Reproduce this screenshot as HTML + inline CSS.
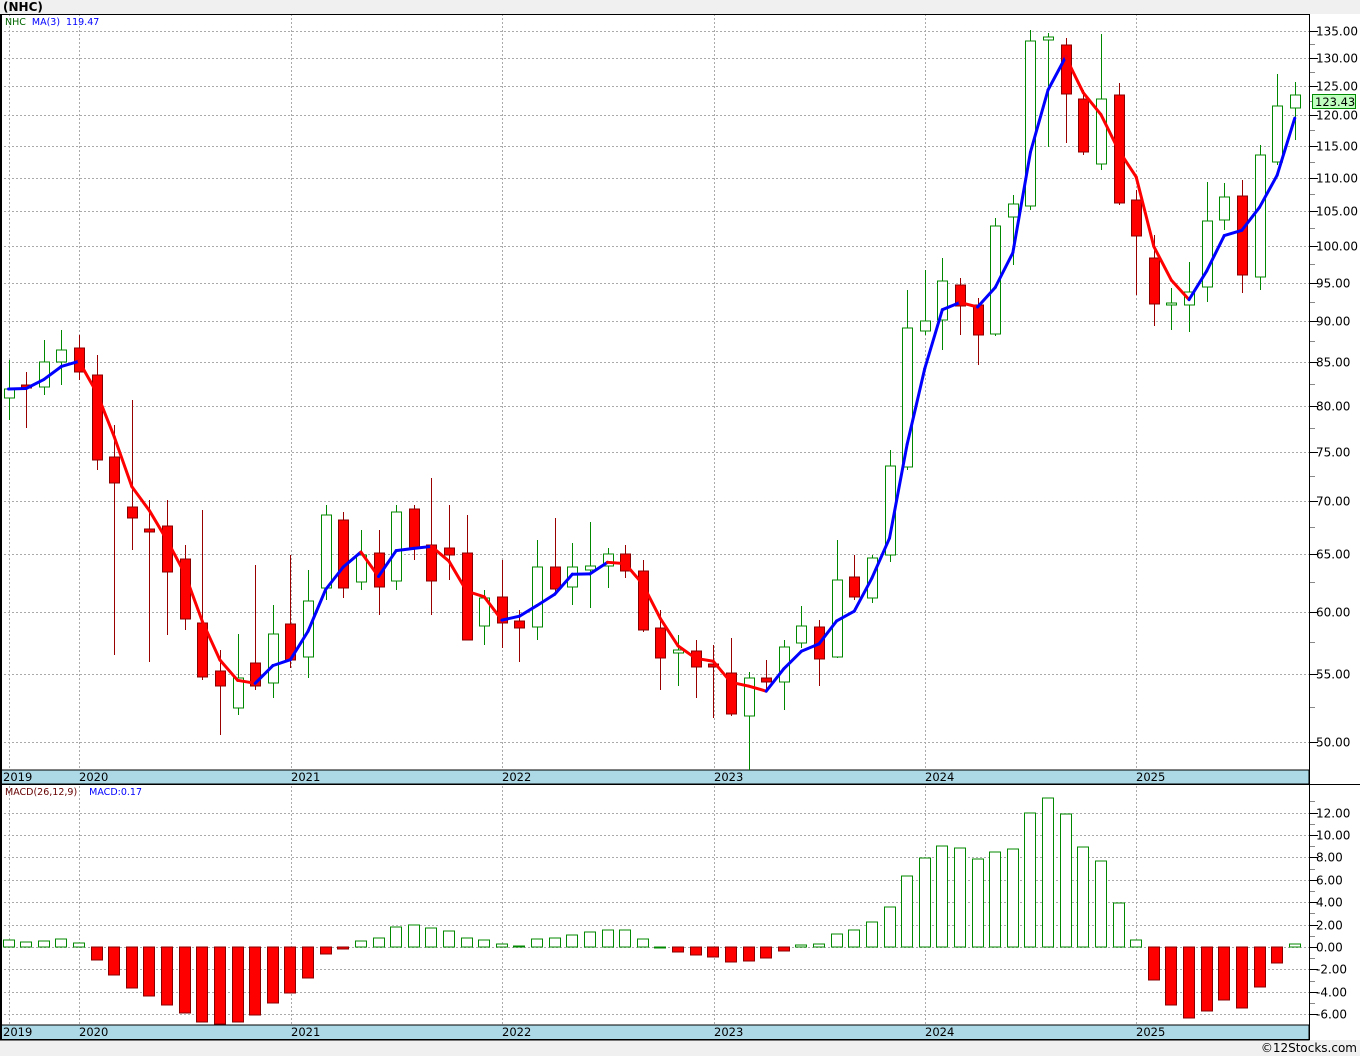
<!DOCTYPE html><html><head><meta charset="utf-8"><style>
body{margin:0;background:#fff;width:1360px;height:1056px;overflow:hidden;font-family:"DejaVu Sans","Liberation Sans",sans-serif}
</style></head><body>
<svg id="s" width="1360" height="1056" xmlns="http://www.w3.org/2000/svg" font-family="DejaVu Sans, Liberation Sans, sans-serif"></svg>
<script>
var D=[[398,389,360,420],[385,388,372,428],[387,362,340,395],[362,350,330,385],[348,372,335,380],[375,460,355,470],[457,483,425,655],[507,518,400,550],[529,532,500,662],[526,572,500,635],[559,619,545,630],[623,677,510,680],[671,686,650,735],[708,678,634,715],[663,686,565,690],[683,634,605,698],[624,660,555,668],[657,601,570,678],[588,515,505,600],[520,588,512,598],[582,555,530,590],[553,587,530,615],[581,512,505,590],[509,548,505,560],[545,581,478,615],[548,555,505,580],[553,640,515,640],[626,598,590,645],[597,623,560,648],[621,628,610,662],[627,567,540,640],[567,589,518,595],[587,567,543,605],[570,566,522,608],[566,554,548,588],[554,571,545,578],[571,630,560,632],[628,658,610,690],[653,650,635,686],[651,667,640,698],[664,667,645,718],[673,714,638,716],[716,678,672,770],[678,682,660,690],[682,647,640,710],[643,626,606,648],[627,659,620,686],[657,580,540,658],[577,597,555,600],[598,558,555,603],[555,466,450,562],[467,328,290,470],[331,321,270,335],[320,281,258,350],[285,306,278,335],[305,335,298,365],[334,226,218,336],[217,204,195,265],[206,41,30,210],[40,37,33,147],[45,94,38,143],[99,152,90,155],[164,99,34,170],[95,203,83,205],[200,236,190,295],[258,304,235,326],[305,303,288,330],[305,292,262,332],[287,221,182,302],[220,197,183,230],[196,275,180,293],[277,155,145,290],[162,106,74,165],[108,95,82,140]];
var M=[940,942,941,939,943,960,975,988,996,1005,1013,1022,1024,1022,1015,1003,993,978,954,949,941,938,927,925,928,931,938,940,944,946,939,938,935,932,930,930,939,947,952,955,957,962,961,958,951,945,944,934,930,922,907,876,858,846,848,859,852,849,813,798,814,847,861,903,940,980,1005,1018,1011,1000,1008,987,963,944];
var h='';function X(i){return 8.5+17.62*i}
function P(y){return 135*Math.exp(-(y-31)/716)}function Y(p){return 31+716*Math.log(135/p)}
var K=11.2;
h+='<rect x="0" y="0" width="1360" height="14" fill="#f0f0f0"/><text x="3" y="11" font-size="12" font-weight="bold" fill="#000">(NHC)</text>';
h+='<rect x="0" y="1040" width="1360" height="16" fill="#f0f0f0"/><text x="1357" y="1052" font-size="12" text-anchor="end" fill="#000">©12Stocks.com</text>';
var yrs=[[9,'2019'],[79,'2020'],[291,'2021'],[502,'2022'],[714,'2023'],[925,'2024'],[1136,'2025']];
var g='stroke="#aaa" stroke-dasharray="2,2" stroke-width="1"';
for(var p=50;p<=135;p+=5){var y=Math.round(Y(p))+.5;h+='<line x1="0" x2="1309" y1="'+y+'" y2="'+y+'" '+g+'/><line x1="1309" x2="1318" y1="'+y+'" y2="'+y+'" stroke="#000"/><text x="1316" y="'+(y+4)+'" font-size="12" fill="#000">'+p.toFixed(2)+'</text>';
var ym=Math.round(Y(p+2.5))+.5;if(p<135)h+='<line x1="1309" x2="1315" y1="'+ym+'" y2="'+ym+'" stroke="#888"/>';}
[47.5,46].forEach(function(p){var ym=Math.round(Y(p))+.5;if(ym<770)h+='<line x1="1309" x2="1315" y1="'+ym+'" y2="'+ym+'" stroke="#888"/>'});
for(var v=-6;v<=12;v+=2){var y=Math.round(947-K*v)+.5;h+='<line x1="0" x2="1309" y1="'+y+'" y2="'+y+'" '+g+'/><line x1="1309" x2="1318" y1="'+y+'" y2="'+y+'" stroke="#000"/><text x="1316" y="'+(y+4)+'" font-size="12" fill="#000">'+(v<0?'-':'')+Math.abs(v).toFixed(2)+'</text>';}
for(var v=-7;v<=13;v+=2){var ym=Math.round(947-K*v)+.5;if(ym>786&&ym<1025)h+='<line x1="1309" x2="1315" y1="'+ym+'" y2="'+ym+'" stroke="#888"/>';}
yrs.forEach(function(a){h+='<line x1="'+(a[0]+.5)+'" x2="'+(a[0]+.5)+'" y1="14" y2="1040" '+g+'/>'});
[[770,784],[1025,1040]].forEach(function(b){h+='<rect x="0" y="'+b[0]+'" width="1309" height="'+(b[1]-b[0])+'" fill="#add8e6" stroke="#000"/>';yrs.forEach(function(a){h+='<text x="'+(a[0]==9?3:a[0])+'" y="'+(b[0]+11)+'" font-size="11.5" fill="#000">'+a[1]+'</text>'})});
D.forEach(function(d,i){var x=Math.round(X(i))+.5,up=d[1]<d[0],t=Math.min(d[0],d[1]),b=Math.max(d[0],d[1]);if(b-t<2)b=t+2;
h+='<line x1="'+x+'" x2="'+x+'" y1="'+d[2]+'" y2="'+d[3]+'" stroke="'+(up?'#080':'#900')+'"/>';
h+='<rect x="'+(x-5)+'" y="'+t+'" width="10" height="'+(b-t)+'" fill="'+(up?'#fff':'#f00')+'" stroke="'+(up?'#080':'#800')+'"/>';});
var ma=[];D.forEach(function(d,i){var s=0,n=0;for(var j=Math.max(0,i-2);j<=i;j++){s+=P(D[j][1]);n++}ma.push(Y(s/n))});
for(var i=1;i<ma.length;i++){h+='<line x1="'+X(i-1)+'" y1="'+ma[i-1]+'" x2="'+X(i)+'" y2="'+ma[i]+'" stroke="'+(ma[i]<ma[i-1]?'#00f':'#f00')+'" stroke-width="3" stroke-linecap="round"/>'}
M.forEach(function(m,i){var x=Math.round(X(i))-5.5;if(m<=947)h+='<rect x="'+x+'" y="'+m+'" width="11" height="'+Math.max(1,947-m)+'" fill="#fff" stroke="#080"/>';else h+='<rect x="'+x+'" y="947" width="11" height="'+(m-947)+'" fill="#f00" stroke="#800"/>';});
h+='<rect x="0.5" y="14.5" width="1309" height="1025" fill="none" stroke="#000"/><line x1="0" x2="1360" y1="784.5" y2="784.5" stroke="#000"/><line x1="1309.5" x2="1309.5" y1="14" y2="1040" stroke="#000"/><line x1="1" x2="1" y1="14" y2="1040" stroke="#000" stroke-width="2"/>';
h+='<rect x="1312.5" y="94.5" width="43" height="14" fill="#c0ffc0" stroke="#080"/><text x="1315" y="106" font-size="11.5" fill="#000">123.43</text>';
h+='<text x="5" y="25" font-size="9.5"><tspan fill="#060">NHC</tspan><tspan fill="#00f" dx="6">MA(3)</tspan><tspan fill="#00f" dx="6">119.47</tspan></text>';
h+='<text x="5" y="795" font-size="9.5"><tspan fill="#600">MACD(26,12,9)</tspan><tspan fill="#00f" dx="12">MACD:0.17</tspan></text>';
document.getElementById('s').innerHTML=h;
</script></body></html>
